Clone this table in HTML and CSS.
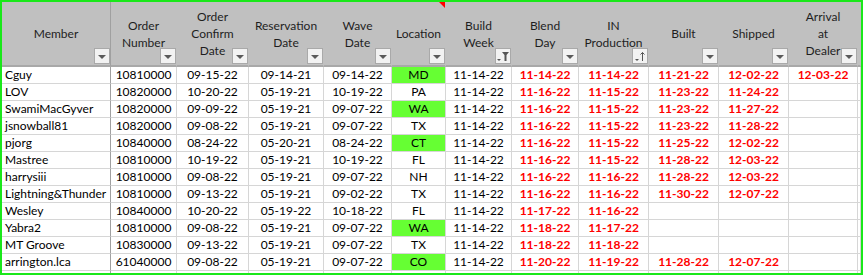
FILE: index.html
```html
<!DOCTYPE html>
<html lang="en">
<head>
  <meta charset="UTF-8">
  <title>Build Tracker</title>
  <link rel="stylesheet" href="styles.css">
</head>
<body>
  <div class="sheet">
    <table>
      <colgroup>
        <col class="w-member">
        <col class="w-66">
        <col class="w-72">
        <col class="w-75">
        <col class="w-68">
        <col class="w-54">
        <col class="w-66">
        <col class="w-67">
        <col class="w-70">
        <col class="w-70">
        <col class="w-70">
        <col class="w-69">
        <col class="w-3">
      </colgroup>
      <thead>
        <tr>
          <th class="member">Member<span class="fb"></span></th>
          <th>Order<br>Number<span class="fb"></span></th>
          <th>Order<br>Confirm<br>Date<span class="fb"></span></th>
          <th>Reservation<br>Date<span class="fb"></span></th>
          <th>Wave<br>Date<span class="fb"></span></th>
          <th class="note">Location<span class="fb"></span></th>
          <th>Build<br>Week<span class="fb icon">
            <svg width="14" height="14" viewBox="0 0 14 14"><path d="M1 10h4l-2 2z" fill="#555"/><path d="M6 3h7l-2.5 3v6h-2V6z" fill="#555"/></svg>
          </span></th>
          <th>Blend<br>Day<span class="fb"></span></th>
          <th>IN<br>Production<span class="fb icon">
            <svg width="14" height="14" viewBox="0 0 14 14"><path d="M2 10h4l-2 2z" fill="#555"/><path d="M9.5 12V3.5M7.5 5.5l2-2 2 2" stroke="#555" stroke-width="1" fill="none"/></svg>
          </span></th>
          <th>Built<span class="fb"></span></th>
          <th>Shipped<span class="fb"></span></th>
          <th>Arrival<br>at<br>Dealer<span class="fb"></span></th>
          <th class="end"></th>
        </tr>
      </thead>
      <tbody>
        <tr><td class="member">Cguy</td><td>10810000</td><td>09-15-22</td><td>09-14-21</td><td>09-14-22</td><td class="green">MD</td><td>11-14-22</td><td class="red">11-14-22</td><td class="red">11-14-22</td><td class="red">11-21-22</td><td class="red">12-02-22</td><td class="red">12-03-22</td><td></td></tr>
        <tr><td class="member">LOV</td><td>10820000</td><td>10-20-22</td><td>05-19-21</td><td>10-19-22</td><td>PA</td><td>11-14-22</td><td class="red">11-16-22</td><td class="red">11-15-22</td><td class="red">11-23-22</td><td class="red">11-24-22</td><td></td><td></td></tr>
        <tr><td class="member">SwamiMacGyver</td><td>10820000</td><td>09-09-22</td><td>05-19-21</td><td>09-07-22</td><td class="green">WA</td><td>11-14-22</td><td class="red">11-16-22</td><td class="red">11-15-22</td><td class="red">11-23-22</td><td class="red">11-27-22</td><td></td><td></td></tr>
        <tr><td class="member">jsnowball81</td><td>10820000</td><td>09-08-22</td><td>05-19-21</td><td>09-07-22</td><td>TX</td><td>11-14-22</td><td class="red">11-16-22</td><td class="red">11-15-22</td><td class="red">11-23-22</td><td class="red">11-28-22</td><td></td><td></td></tr>
        <tr><td class="member">pjorg</td><td>10840000</td><td>08-24-22</td><td>05-20-21</td><td>08-24-22</td><td class="green">CT</td><td>11-14-22</td><td class="red">11-16-22</td><td class="red">11-15-22</td><td class="red">11-25-22</td><td class="red">12-02-22</td><td></td><td></td></tr>
        <tr><td class="member">Mastree</td><td>10810000</td><td>10-19-22</td><td>05-19-21</td><td>10-19-22</td><td>FL</td><td>11-14-22</td><td class="red">11-16-22</td><td class="red">11-15-22</td><td class="red">11-28-22</td><td class="red">12-03-22</td><td></td><td></td></tr>
        <tr><td class="member">harrysiii</td><td>10810000</td><td>09-08-22</td><td>05-19-21</td><td>09-07-22</td><td>NH</td><td>11-14-22</td><td class="red">11-16-22</td><td class="red">11-16-22</td><td class="red">11-28-22</td><td class="red">12-03-22</td><td></td><td></td></tr>
        <tr><td class="member">Lightning&amp;Thunder</td><td>10810000</td><td>09-13-22</td><td>05-19-21</td><td>09-02-22</td><td>TX</td><td>11-14-22</td><td class="red">11-16-22</td><td class="red">11-16-22</td><td class="red">11-30-22</td><td class="red">12-07-22</td><td></td><td></td></tr>
        <tr><td class="member">Wesley</td><td>10840000</td><td>10-20-22</td><td>05-19-22</td><td>10-18-22</td><td>FL</td><td>11-14-22</td><td class="red">11-17-22</td><td class="red">11-16-22</td><td></td><td></td><td></td><td></td></tr>
        <tr><td class="member">Yabra2</td><td>10810000</td><td>09-08-22</td><td>05-19-21</td><td>09-07-22</td><td class="green">WA</td><td>11-14-22</td><td class="red">11-18-22</td><td class="red">11-17-22</td><td></td><td></td><td></td><td></td></tr>
        <tr><td class="member">MT Groove</td><td>10830000</td><td>09-13-22</td><td>05-19-21</td><td>09-07-22</td><td>TX</td><td>11-14-22</td><td class="red">11-18-22</td><td class="red">11-18-22</td><td></td><td></td><td></td><td></td></tr>
        <tr><td class="member">arrington.lca</td><td>61040000</td><td>09-08-22</td><td>05-19-21</td><td>09-07-22</td><td class="green">CO</td><td>11-14-22</td><td class="red">11-20-22</td><td class="red">11-19-22</td><td class="red">11-28-22</td><td class="red">12-07-22</td><td></td><td></td></tr>
        <tr><td class="member"></td><td></td><td></td><td></td><td></td><td></td><td></td><td></td><td></td><td></td><td></td><td></td><td></td></tr>
      </tbody>
    </table>
  </div>
</body>
</html>
```

FILE: styles.css
```css
body {
  margin: 0;
  background-color: #fff;
  font-family: Lato, "Open Sans", sans-serif;
  font-size: 12px;
  color: #000;
}
.sheet {
  width: 863px;
  height: 275px;
  box-sizing: border-box;
  border: 2px solid #1ae81a;
  overflow: hidden;
}
table {
  width: 859px;
  table-layout: fixed;
  border-collapse: separate;
  border-spacing: 0;
}
.w-member { width: 109px; }
.w-66 { width: 66px; }
.w-72 { width: 72px; }
.w-75 { width: 75px; }
.w-68 { width: 68px; }
.w-54 { width: 54px; }
.w-67 { width: 67px; }
.w-70 { width: 70px; }
.w-69 { width: 69px; }
.w-3 { width: 3px; }
th, td {
  padding: 0;
  white-space: nowrap;
  overflow: hidden;
  text-align: center;
}
th {
  position: relative;
  height: 63px;
  line-height: 17px;
  font-weight: normal;
  color: #1e1e1e;
  background-color: #c0c0c0;
  border-right: 1px solid #c0c0c0;
  border-bottom: 2px solid #a8a8a8;
  vertical-align: middle;
}
td {
  height: 16px;
  line-height: 16px;
  border-right: 1px solid #d6d6d6;
  border-bottom: 1px solid #d6d6d6;
}
th.member, td.member {
  border-right-color: #a0a0a0;
}
td.member {
  text-align: left;
  padding-left: 3px;
}
td.red {
  color: #ff0000;
  font-weight: bold;
}
td.green {
  background-color: #66ff33;
}
.fb {
  position: absolute;
  right: 0;
  bottom: 1px;
  width: 16px;
  height: 16px;
  box-sizing: border-box;
  border: 1px solid #a9a9a9;
  background-color: #f2f2f2;
}
.fb::after {
  content: "";
  position: absolute;
  left: 3px;
  top: 6px;
  border-top: 4px solid #5a5a5a;
  border-left: 4px solid transparent;
  border-right: 4px solid transparent;
}
.fb.icon::after {
  display: none;
}
.fb svg {
  display: block;
}
.note::before {
  content: "";
  position: absolute;
  top: 0;
  right: 0;
  border-top: 6px solid #ff0000;
  border-left: 6px solid transparent;
}
```
